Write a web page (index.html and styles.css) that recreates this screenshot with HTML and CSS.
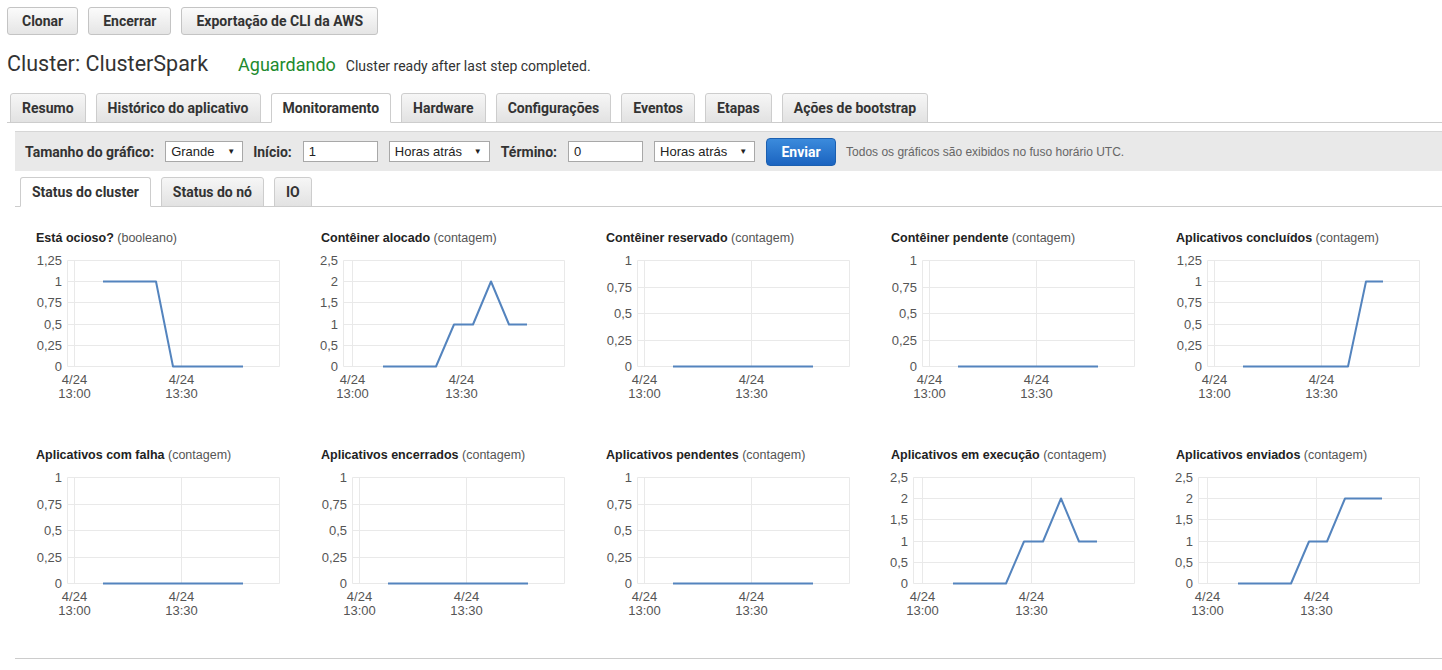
FILE: index.html
```html
<!DOCTYPE html>
<html lang="pt-BR">
<head>
<meta charset="utf-8">
<title>Cluster: ClusterSpark</title>
<link rel="stylesheet" href="styles.css">
</head>
<body>
<div class="actions">
  <button class="btn">Clonar</button>
  <button class="btn">Encerrar</button>
  <button class="btn">Exportação de CLI da AWS</button>
</div>

<div class="cluster-head">
  <h1 class="cluster-name">Cluster: ClusterSpark</h1>
  <span class="status">Aguardando</span>
  <span class="status-msg">Cluster ready after last step completed.</span>
</div>

<ul class="tabs">
  <li class="tab">Resumo</li>
  <li class="tab">Histórico do aplicativo</li>
  <li class="tab active">Monitoramento</li>
  <li class="tab">Hardware</li>
  <li class="tab">Configurações</li>
  <li class="tab">Eventos</li>
  <li class="tab">Etapas</li>
  <li class="tab">Ações de bootstrap</li>
</ul>

<section class="monitor">
  <div class="toolbar">
    <span class="tb-label">Tamanho do gráfico:</span>
    <span class="select sel-size">Grande</span>
    <span class="tb-label">Início:</span>
    <span class="field">1</span>
    <span class="select sel-unit">Horas atrás</span>
    <span class="tb-label">Término:</span>
    <span class="field">0</span>
    <span class="select sel-unit">Horas atrás</span>
    <button class="btn-primary">Enviar</button>
    <span class="tb-note">Todos os gráficos são exibidos no fuso horário UTC.</span>
  </div>

  <ul class="subtabs">
    <li class="subtab active">Status do cluster</li>
    <li class="subtab">Status do nó</li>
    <li class="subtab">IO</li>
  </ul>

  <div class="charts">
    <!-- Row 1 -->
    <figure class="chart">
      <figcaption class="chart-title"><b>Está ocioso?</b> (booleano)</figcaption>
      <svg class="plot" viewBox="0 0 285 160" width="285" height="160">
        <path class="grid" d="M47.5 10.5H259.5M47.5 31.5H259.5M47.5 52.5H259.5M47.5 74.5H259.5M47.5 95.5H259.5M47.5 116.5H259.5M47.5 10.5V116.5M54.5 10.5V116.5M161.5 10.5V116.5M259.5 10.5V116.5"/>
        <g class="ylab">
          <text x="42" y="15">1,25</text><text x="42" y="36">1</text><text x="42" y="57">0,75</text><text x="42" y="79">0,5</text><text x="42" y="100">0,25</text><text x="42" y="121">0</text>
        </g>
        <g class="xlab">
          <text x="54.5" y="134">4/24</text><text x="54.5" y="147.5">13:00</text><text x="161.5" y="134">4/24</text><text x="161.5" y="147.5">13:30</text>
        </g>
        <polyline class="series" points="83,31.5 136,31.5 153,116.5 223,116.5"/>
      </svg>
    </figure>

    <figure class="chart">
      <figcaption class="chart-title"><b>Contêiner alocado</b> (contagem)</figcaption>
      <svg class="plot" viewBox="0 0 285 160" width="285" height="160">
        <path class="grid" d="M38.5 10.5H259.5M38.5 31.5H259.5M38.5 52.5H259.5M38.5 74.5H259.5M38.5 95.5H259.5M38.5 116.5H259.5M38.5 10.5V116.5M47.5 10.5V116.5M156.5 10.5V116.5M259.5 10.5V116.5"/>
        <g class="ylab">
          <text x="33" y="15">2,5</text><text x="33" y="36">2</text><text x="33" y="57">1,5</text><text x="33" y="79">1</text><text x="33" y="100">0,5</text><text x="33" y="121">0</text>
        </g>
        <g class="xlab">
          <text x="47.5" y="134">4/24</text><text x="47.5" y="147.5">13:00</text><text x="156.5" y="134">4/24</text><text x="156.5" y="147.5">13:30</text>
        </g>
        <polyline class="series" points="78,116.5 131,116.5 149,74.5 168,74.5 186,31.5 204,74.5 222,74.5"/>
      </svg>
    </figure>

    <figure class="chart">
      <figcaption class="chart-title"><b>Contêiner reservado</b> (contagem)</figcaption>
      <svg class="plot" viewBox="0 0 285 160" width="285" height="160">
        <path class="grid" d="M47.5 10.5H259.5M47.5 37.5H259.5M47.5 63.5H259.5M47.5 90.5H259.5M47.5 116.5H259.5M47.5 10.5V116.5M54.5 10.5V116.5M161.5 10.5V116.5M259.5 10.5V116.5"/>
        <g class="ylab">
          <text x="42" y="15">1</text><text x="42" y="42">0,75</text><text x="42" y="68">0,5</text><text x="42" y="95">0,25</text><text x="42" y="121">0</text>
        </g>
        <g class="xlab">
          <text x="54.5" y="134">4/24</text><text x="54.5" y="147.5">13:00</text><text x="161.5" y="134">4/24</text><text x="161.5" y="147.5">13:30</text>
        </g>
        <polyline class="series" points="83,116.5 223,116.5"/>
      </svg>
    </figure>

    <figure class="chart">
      <figcaption class="chart-title"><b>Contêiner pendente</b> (contagem)</figcaption>
      <svg class="plot" viewBox="0 0 285 160" width="285" height="160">
        <path class="grid" d="M47.5 10.5H259.5M47.5 37.5H259.5M47.5 63.5H259.5M47.5 90.5H259.5M47.5 116.5H259.5M47.5 10.5V116.5M54.5 10.5V116.5M161.5 10.5V116.5M259.5 10.5V116.5"/>
        <g class="ylab">
          <text x="42" y="15">1</text><text x="42" y="42">0,75</text><text x="42" y="68">0,5</text><text x="42" y="95">0,25</text><text x="42" y="121">0</text>
        </g>
        <g class="xlab">
          <text x="54.5" y="134">4/24</text><text x="54.5" y="147.5">13:00</text><text x="161.5" y="134">4/24</text><text x="161.5" y="147.5">13:30</text>
        </g>
        <polyline class="series" points="83,116.5 223,116.5"/>
      </svg>
    </figure>

    <figure class="chart">
      <figcaption class="chart-title"><b>Aplicativos concluídos</b> (contagem)</figcaption>
      <svg class="plot" viewBox="0 0 285 160" width="285" height="160">
        <path class="grid" d="M47.5 10.5H259.5M47.5 31.5H259.5M47.5 52.5H259.5M47.5 74.5H259.5M47.5 95.5H259.5M47.5 116.5H259.5M47.5 10.5V116.5M54.5 10.5V116.5M161.5 10.5V116.5M259.5 10.5V116.5"/>
        <g class="ylab">
          <text x="42" y="15">1,25</text><text x="42" y="36">1</text><text x="42" y="57">0,75</text><text x="42" y="79">0,5</text><text x="42" y="100">0,25</text><text x="42" y="121">0</text>
        </g>
        <g class="xlab">
          <text x="54.5" y="134">4/24</text><text x="54.5" y="147.5">13:00</text><text x="161.5" y="134">4/24</text><text x="161.5" y="147.5">13:30</text>
        </g>
        <polyline class="series" points="83,116.5 188,116.5 206,31.5 223,31.5"/>
      </svg>
    </figure>

    <!-- Row 2 -->
    <figure class="chart">
      <figcaption class="chart-title"><b>Aplicativos com falha</b> (contagem)</figcaption>
      <svg class="plot" viewBox="0 0 285 160" width="285" height="160">
        <path class="grid" d="M47.5 10.5H259.5M47.5 37.5H259.5M47.5 63.5H259.5M47.5 90.5H259.5M47.5 116.5H259.5M47.5 10.5V116.5M54.5 10.5V116.5M161.5 10.5V116.5M259.5 10.5V116.5"/>
        <g class="ylab">
          <text x="42" y="15">1</text><text x="42" y="42">0,75</text><text x="42" y="68">0,5</text><text x="42" y="95">0,25</text><text x="42" y="121">0</text>
        </g>
        <g class="xlab">
          <text x="54.5" y="134">4/24</text><text x="54.5" y="147.5">13:00</text><text x="161.5" y="134">4/24</text><text x="161.5" y="147.5">13:30</text>
        </g>
        <polyline class="series" points="83,116.5 223,116.5"/>
      </svg>
    </figure>

    <figure class="chart">
      <figcaption class="chart-title"><b>Aplicativos encerrados</b> (contagem)</figcaption>
      <svg class="plot" viewBox="0 0 285 160" width="285" height="160">
        <path class="grid" d="M47.5 10.5H259.5M47.5 37.5H259.5M47.5 63.5H259.5M47.5 90.5H259.5M47.5 116.5H259.5M47.5 10.5V116.5M54.5 10.5V116.5M161.5 10.5V116.5M259.5 10.5V116.5"/>
        <g class="ylab">
          <text x="42" y="15">1</text><text x="42" y="42">0,75</text><text x="42" y="68">0,5</text><text x="42" y="95">0,25</text><text x="42" y="121">0</text>
        </g>
        <g class="xlab">
          <text x="54.5" y="134">4/24</text><text x="54.5" y="147.5">13:00</text><text x="161.5" y="134">4/24</text><text x="161.5" y="147.5">13:30</text>
        </g>
        <polyline class="series" points="83,116.5 223,116.5"/>
      </svg>
    </figure>

    <figure class="chart">
      <figcaption class="chart-title"><b>Aplicativos pendentes</b> (contagem)</figcaption>
      <svg class="plot" viewBox="0 0 285 160" width="285" height="160">
        <path class="grid" d="M47.5 10.5H259.5M47.5 37.5H259.5M47.5 63.5H259.5M47.5 90.5H259.5M47.5 116.5H259.5M47.5 10.5V116.5M54.5 10.5V116.5M161.5 10.5V116.5M259.5 10.5V116.5"/>
        <g class="ylab">
          <text x="42" y="15">1</text><text x="42" y="42">0,75</text><text x="42" y="68">0,5</text><text x="42" y="95">0,25</text><text x="42" y="121">0</text>
        </g>
        <g class="xlab">
          <text x="54.5" y="134">4/24</text><text x="54.5" y="147.5">13:00</text><text x="161.5" y="134">4/24</text><text x="161.5" y="147.5">13:30</text>
        </g>
        <polyline class="series" points="83,116.5 223,116.5"/>
      </svg>
    </figure>

    <figure class="chart">
      <figcaption class="chart-title"><b>Aplicativos em execução</b> (contagem)</figcaption>
      <svg class="plot" viewBox="0 0 285 160" width="285" height="160">
        <path class="grid" d="M38.5 10.5H259.5M38.5 31.5H259.5M38.5 52.5H259.5M38.5 74.5H259.5M38.5 95.5H259.5M38.5 116.5H259.5M38.5 10.5V116.5M47.5 10.5V116.5M156.5 10.5V116.5M259.5 10.5V116.5"/>
        <g class="ylab">
          <text x="33" y="15">2,5</text><text x="33" y="36">2</text><text x="33" y="57">1,5</text><text x="33" y="79">1</text><text x="33" y="100">0,5</text><text x="33" y="121">0</text>
        </g>
        <g class="xlab">
          <text x="47.5" y="134">4/24</text><text x="47.5" y="147.5">13:00</text><text x="156.5" y="134">4/24</text><text x="156.5" y="147.5">13:30</text>
        </g>
        <polyline class="series" points="78,116.5 131,116.5 149,74.5 168,74.5 186,31.5 204,74.5 222,74.5"/>
      </svg>
    </figure>

    <figure class="chart">
      <figcaption class="chart-title"><b>Aplicativos enviados</b> (contagem)</figcaption>
      <svg class="plot" viewBox="0 0 285 160" width="285" height="160">
        <path class="grid" d="M38.5 10.5H259.5M38.5 31.5H259.5M38.5 52.5H259.5M38.5 74.5H259.5M38.5 95.5H259.5M38.5 116.5H259.5M38.5 10.5V116.5M47.5 10.5V116.5M156.5 10.5V116.5M259.5 10.5V116.5"/>
        <g class="ylab">
          <text x="33" y="15">2,5</text><text x="33" y="36">2</text><text x="33" y="57">1,5</text><text x="33" y="79">1</text><text x="33" y="100">0,5</text><text x="33" y="121">0</text>
        </g>
        <g class="xlab">
          <text x="47.5" y="134">4/24</text><text x="47.5" y="147.5">13:00</text><text x="156.5" y="134">4/24</text><text x="156.5" y="147.5">13:30</text>
        </g>
        <polyline class="series" points="78,116.5 131,116.5 149,74.5 167,74.5 185,31.5 222,31.5"/>
      </svg>
    </figure>
  </div>
</section>
</body>
</html>
```

FILE: styles.css
```css
* { box-sizing: border-box; }

html, body { background: #fff; }

body {
  margin: 0;
  font-family: Roboto, "Liberation Sans", Arial, sans-serif;
  color: #333;
  overflow: hidden;
}

/* ---------- top action buttons ---------- */
.actions {
  display: flex;
  gap: 10px;
  padding: 7px 0 0 7px;
}

.btn {
  height: 28px;
  padding: 0 14px;
  font: bold 14px Roboto, "Liberation Sans", Arial, sans-serif;
  color: #333;
  border: 1px solid #c4c4c4;
  border-radius: 3px;
  background: linear-gradient(#fbfbfb, #e5e5e5);
}

/* ---------- cluster heading ---------- */
.cluster-head {
  display: flex;
  align-items: baseline;
  height: 24px;
  margin-top: 17px;
  padding-left: 7px;
}

.cluster-name {
  margin: 0;
  font-size: 21.5px;
  font-weight: normal;
  line-height: 24px;
  color: #333;
}

.status {
  margin-left: 30px;
  font-size: 18px;
  color: #1e8a2e;
}

.status-msg {
  margin-left: 10px;
  font-size: 14px;
  color: #333;
}

/* ---------- main tabs ---------- */
.tabs {
  display: flex;
  gap: 10px;
  list-style: none;
  margin: 17px 0 0 7px;
  padding: 0 0 0 3px;
  border-bottom: 1px solid #cccccc;
}

.tab {
  height: 30px;
  margin-bottom: -1px;
  padding: 0 11px;
  line-height: 29px;
  font-size: 14px;
  font-weight: bold;
  color: #333;
  border: 1px solid #cdcdcd;
  border-radius: 3px 3px 0 0;
  background: linear-gradient(#f6f6f6, #e2e2e2);
}

.tab.active {
  background: #fff;
  border-bottom-color: #fff;
}

/* ---------- monitoring panel ---------- */
.monitor {
  margin: 8px 0 0 15px;
}

.toolbar {
  display: flex;
  align-items: center;
  height: 40px;
  padding-left: 10px;
  background: #e9e9e9;
  border-top: 1px solid #d6d6d6;
}

.tb-label {
  font-size: 14px;
  font-weight: bold;
  color: #333;
  margin-right: 11px;
}

.select, .field {
  display: inline-flex;
  align-items: center;
  height: 21px;
  padding: 0 5px;
  font: 13px "Liberation Sans", Arial, sans-serif;
  color: #222;
  background: #fff;
  border: 1px solid #a8a8a8;
  margin-right: 10px;
}

.select {
  position: relative;
}

.select::after {
  content: "▼";
  position: absolute;
  right: 7px;
  top: 5px;
  font-size: 8px;
  color: #222;
}

.sel-size { width: 78px; }
.sel-unit { width: 101px; margin-right: 11px; }
.field { width: 75px; margin-right: 11px; }

.btn-primary {
  height: 28px;
  width: 70px;
  margin: 0 10px 0 0;
  font: bold 14px Roboto, "Liberation Sans", Arial, sans-serif;
  color: #fff;
  border: 1px solid #1b5fb0;
  border-radius: 4px;
  background: linear-gradient(#3b8bdc, #1b64c0);
}

.tb-note {
  font: 12px "Liberation Sans", Arial, sans-serif;
  color: #666;
}

/* ---------- sub tabs ---------- */
.subtabs {
  display: flex;
  gap: 10px;
  list-style: none;
  margin: 6px 0 0 0;
  padding: 0 0 0 5px;
  border-bottom: 1px solid #cccccc;
}

.subtab {
  height: 30px;
  margin-bottom: -1px;
  padding: 0 11px;
  line-height: 29px;
  font-size: 14px;
  font-weight: bold;
  color: #333;
  border: 1px solid #cdcdcd;
  border-radius: 3px 3px 0 0;
  background: linear-gradient(#f6f6f6, #e2e2e2);
}

.subtab.active {
  background: #fff;
  border-bottom-color: #fff;
}

/* ---------- charts ---------- */
.charts {
  display: grid;
  grid-template-columns: repeat(5, 285px);
  row-gap: 37px;
  padding: 23px 0 31px 5px;
  border-bottom: 1px solid #cccccc;
}

.chart {
  margin: 0;
  height: 180px;
}

.chart-title {
  height: 15px;
  margin-bottom: 5px;
  padding: 1px 0 0 16px;
  font: 12.5px "Liberation Sans", Arial, sans-serif;
  line-height: 14px;
  color: #555;
  white-space: nowrap;
}

.chart-title b {
  color: #222;
}

.plot {
  display: block;
}

.plot .grid {
  fill: none;
  stroke: #e9e9e9;
  stroke-width: 1;
}

.plot text {
  font-family: "Liberation Sans", Arial, sans-serif;
  font-size: 13px;
  fill: #555;
}

.plot .ylab text { text-anchor: end; }
.plot .xlab text { text-anchor: middle; }

.plot .series {
  fill: none;
  stroke: #5484be;
  stroke-width: 2;
  stroke-linejoin: round;
}
```
